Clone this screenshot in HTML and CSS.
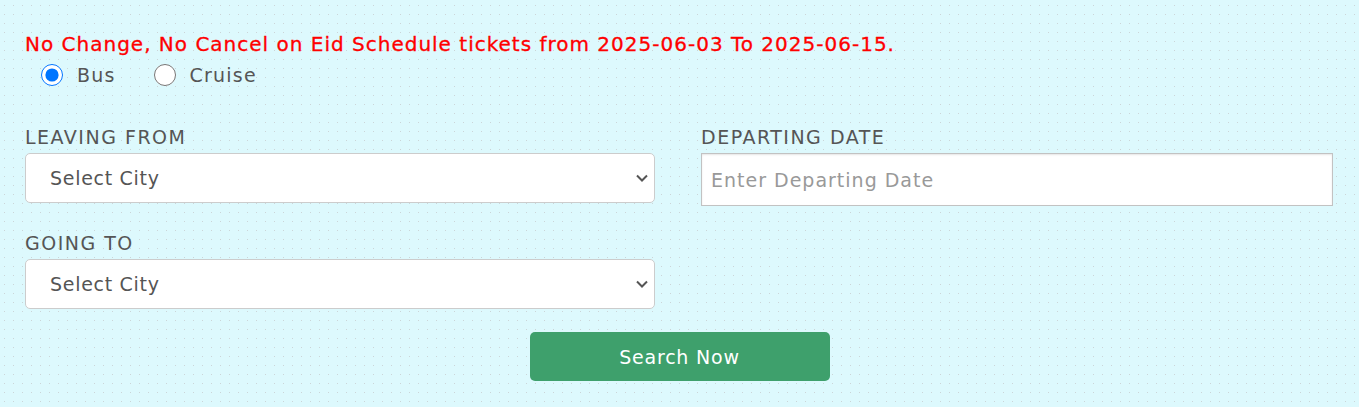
FILE: index.html
```html
<!DOCTYPE html>
<html lang="en">
<head>
  <meta charset="UTF-8" />
  <title>Search Tickets</title>
  <link rel="stylesheet" href="styles.css">
</head>
<body>
  <form class="search-form">
    <p class="notice">No Change, No Cancel on Eid Schedule tickets from 2025-06-03 To 2025-06-15.</p>

    <div class="modes">
      <label class="mode"><input type="radio" name="mode" value="bus" checked> Bus</label>
      <label class="mode"><input type="radio" name="mode" value="cruise"> Cruise</label>
    </div>

    <div class="fields">
      <div class="field">
        <label class="field-label">LEAVING FROM</label>
        <div class="select-wrap">
          <select class="control select">
            <option>Select City</option>
          </select>
          <svg class="chevron" width="12" height="8" viewBox="0 0 12 8"><path d="M1 1.5l5 5 5-5" fill="none" stroke="#555" stroke-width="2"/></svg>
        </div>
      </div>

      <div class="field">
        <label class="field-label">DEPARTING DATE</label>
        <input type="text" class="control date" placeholder="Enter Departing Date">
      </div>

      <div class="field">
        <label class="field-label">GOING TO</label>
        <div class="select-wrap">
          <select class="control select">
            <option>Select City</option>
          </select>
          <svg class="chevron" width="12" height="8" viewBox="0 0 12 8"><path d="M1 1.5l5 5 5-5" fill="none" stroke="#555" stroke-width="2"/></svg>
        </div>
      </div>
    </div>

    <div class="actions">
      <button type="submit" class="search-btn">Search Now</button>
    </div>
  </form>
</body>
</html>
```

FILE: styles.css
```css
html, body {
  height: 100%;
}
body {
  margin: 0;
  font-family: "DejaVu Sans", sans-serif;
  background-color: #ddf9fd;
  background-image: radial-gradient(circle, #cbd5d8 0.8px, transparent 1px);
  background-size: 9px 9px;
  background-position: 0 1px;
}
.search-form {
  padding: 30px 25px 0 25px;
}
.notice {
  margin: 0;
  color: #ff0000;
  font-size: 20px;
  letter-spacing: 1px;
  line-height: 28px;
  -webkit-text-stroke: 0.3px #ff0000;
}
.modes {
  display: flex;
  gap: 38px;
  padding-left: 16px;
}
.mode {
  display: flex;
  align-items: center;
  gap: 14px;
  font-size: 19px;
  letter-spacing: 1.2px;
  color: #555;
  height: 34px;
}
.mode input {
  width: 22px;
  height: 22px;
  margin: 0;
}
.fields {
  display: grid;
  grid-template-columns: 630px 632px;
  column-gap: 46px;
  row-gap: 26px;
  margin-top: 34px;
}
.field-label {
  display: block;
  font-size: 19px;
  letter-spacing: 1.5px;
  color: #555;
  line-height: 22px;
  margin-bottom: 5px;
}
.select-wrap {
  position: relative;
}
.control {
  display: block;
  width: 100%;
  box-sizing: border-box;
  font-family: inherit;
  background: #fff;
  border: 1px solid #ccc;
  outline: none;
}
.select {
  appearance: none;
  height: 50px;
  border-radius: 5px;
  padding: 0 24px;
  font-size: 19px;
  letter-spacing: 0.7px;
  color: #555;
}
.chevron {
  position: absolute;
  right: 7px;
  top: 21px;
}
.date {
  height: 53px;
  border: 1px solid #c2c2c2;
  box-shadow: inset 0 1px 2px rgba(0, 0, 0, 0.1);
  border-radius: 0;
  padding: 0 9px;
  font-size: 19px;
  letter-spacing: 1px;
  color: #555;
}
.date::placeholder {
  color: #999;
}
.actions {
  display: flex;
  justify-content: center;
  margin-top: 23px;
}
.search-btn {
  width: 300px;
  height: 49px;
  background-color: #3ea06c;
  color: #fff;
  border: none;
  border-radius: 5px;
  font-family: inherit;
  font-size: 19px;
  letter-spacing: 0.8px;
  cursor: pointer;
}
```
